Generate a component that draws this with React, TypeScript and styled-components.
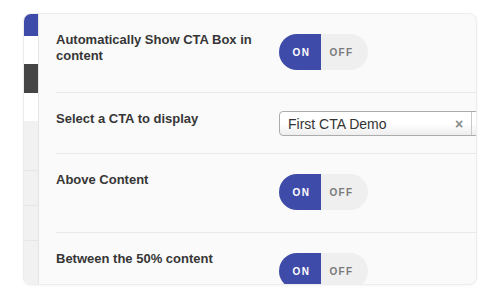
import styled, { createGlobalStyle } from "styled-components";

const GlobalStyle = createGlobalStyle`
  html, body {
    margin: 0;
    padding: 0;
    background: #ffffff;
  }
  body {
    font-family: "Liberation Sans", Arial, sans-serif;
  }
`;

interface ISetting {
  label: string;
  kind: "toggle" | "select";
  height: number;
}

const settings: ISetting[] = [
  { label: "Automatically Show CTA Box in content", kind: "toggle", height: 79 },
  { label: "Select a CTA to display", kind: "select", height: 61 },
  { label: "Above Content", kind: "toggle", height: 79 },
  { label: "Between the 50% content", kind: "toggle", height: 79 },
];

const sideItems = [
  { color: "#3f4ba8", height: 22 },
  { color: "#ffffff", height: 28 },
  { color: "#454545", height: 29 },
  { color: "#ffffff", height: 28 },
  { color: "#f1f1f1", height: 50 },
  { color: "#f1f1f1", height: 35 },
  { color: "#f1f1f1", height: 35 },
  { color: "#f1f1f1", height: 60 },
];

function Toggle() {
  return (
    <ToggleWrap>
      <ToggleOn>ON</ToggleOn>
      <ToggleOff>OFF</ToggleOff>
    </ToggleWrap>
  );
}

function CtaSelect() {
  return (
    <SelectBox>
      <SelectValue>First CTA Demo</SelectValue>
      <SelectClear>×</SelectClear>
      <SelectArrow>
        <Caret />
      </SelectArrow>
    </SelectBox>
  );
}

function App() {
  return (
    <>
      <GlobalStyle />
      <Page>
        <Card>
          <SideNav>
            {sideItems.map((item, i) => (
              <SideItem key={i} $color={item.color} $height={item.height} />
            ))}
          </SideNav>
          <Main>
            {settings.map((s) => (
              <Row key={s.label} $height={s.height}>
                <Label>{s.label}</Label>
                {s.kind === "toggle" ? <Toggle /> : <CtaSelect />}
              </Row>
            ))}
          </Main>
        </Card>
      </Page>
    </>
  );
}

const Page = styled.div`
  width: 500px;
  height: 304px;
  padding: 13px 0 0 23px;
  box-sizing: border-box;
`;

const Card = styled.div`
  display: flex;
  width: 454px;
  height: 272px;
  box-sizing: border-box;
  border: 1px solid #ececec;
  border-radius: 8px;
  overflow: hidden;
  background: #fafafa;
  box-shadow: 0 1px 3px rgba(0, 0, 0, 0.04);
`;

const SideNav = styled.div`
  display: flex;
  flex-direction: column;
  flex: none;
  width: 14px;
  background: #f1f1f1;
  border-right: 1px solid #e4e4e4;
`;

const SideItem = styled.div<{ $color: string; $height: number }>`
  flex: none;
  height: ${(p) => p.$height}px;
  background: ${(p) => p.$color};
  border-bottom: 1px solid
    ${(p) => (p.$color === "#f1f1f1" ? "#e6e6e6" : "transparent")};
  box-sizing: border-box;
`;

const Main = styled.div`
  flex: 1;
  display: flex;
  flex-direction: column;
  padding-left: 17px;
  min-width: 0;
`;

const Row = styled.div<{ $height: number }>`
  display: flex;
  align-items: flex-start;
  flex: none;
  height: ${(p) => p.$height}px;
  padding-top: 18px;
  box-sizing: border-box;
  border-bottom: 1px solid #e9e9e9;
`;

const Label = styled.div`
  flex: 0 0 223px;
  padding-right: 22px;
  box-sizing: border-box;
  color: #363636;
  font-size: 13px;
  font-weight: 700;
  line-height: 16px;
`;

const ToggleWrap = styled.div`
  display: flex;
  flex: none;
  margin-top: 2px;
  width: 89px;
  height: 36px;
  border-radius: 18px;
  overflow: hidden;
  font-size: 10px;
  font-weight: 700;
  letter-spacing: 1.4px;
`;

const ToggleOn = styled.div`
  display: flex;
  align-items: center;
  justify-content: center;
  width: 42px;
  padding-left: 3px;
  box-sizing: border-box;
  background: #3f4ba8;
  color: #ffffff;
`;

const ToggleOff = styled.div`
  display: flex;
  align-items: center;
  justify-content: center;
  flex: 1;
  padding-right: 6px;
  box-sizing: border-box;
  background: #efefef;
  color: #7a7a7a;
`;

const SelectBox = styled.div`
  display: flex;
  align-items: center;
  flex: none;
  width: 212px;
  height: 25px;
  box-sizing: border-box;
  border: 1px solid #acacac;
  border-radius: 4px;
  background: linear-gradient(#ffffff 50%, #eeeeee);
`;

const SelectValue = styled.div`
  flex: 1;
  padding-left: 8px;
  color: #333333;
  font-size: 14px;
`;

const SelectClear = styled.div`
  width: 16px;
  color: #8a8a8a;
  font-size: 14px;
  font-weight: 700;
`;

const SelectArrow = styled.div`
  display: flex;
  align-items: center;
  justify-content: center;
  align-self: stretch;
  width: 18px;
  border-left: 1px solid #c8c8c8;
`;

const Caret = styled.div`
  width: 0;
  height: 0;
  border-left: 3px solid transparent;
  border-right: 3px solid transparent;
  border-top: 4px solid #999999;
`;

export default App;
